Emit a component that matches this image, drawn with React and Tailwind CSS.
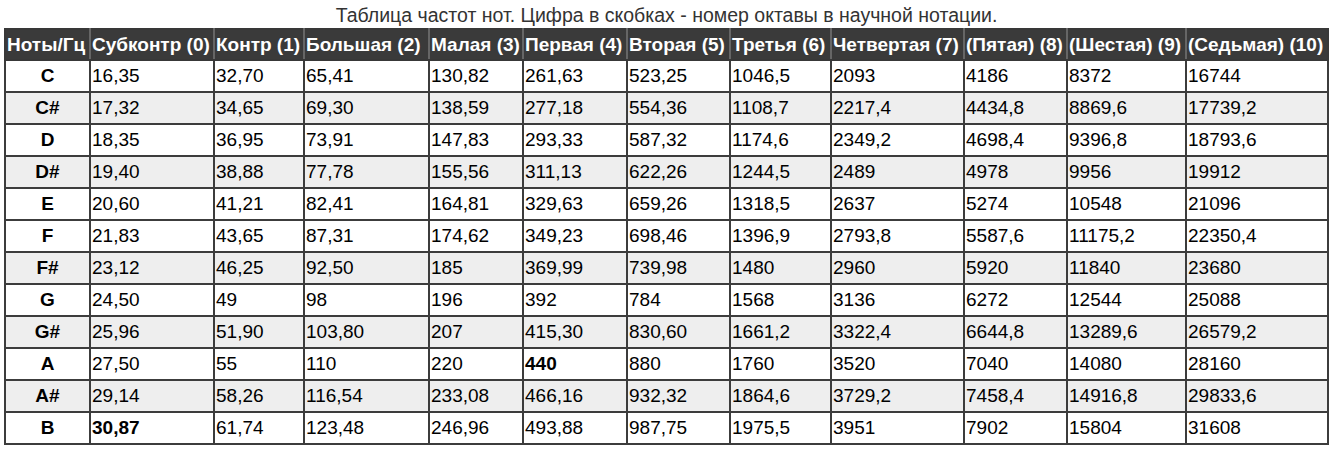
const headers = ["Ноты/Гц","Субконтр (0)","Контр (1)","Большая (2)","Малая (3)","Первая (4)","Вторая (5)","Третья (6)","Четвертая (7)","(Пятая) (8)","(Шестая) (9)","(Седьмая) (10)"];
const widths = ["w-[85px]","w-[124px]","w-[90px]","w-[125px]","w-[94px]","w-[104px]","w-[103px]","w-[101px]","w-[133px]","w-[103px]","w-[119px]","w-[142px]"];
const rows = [
  ["C","16,35","32,70","65,41","130,82","261,63","523,25","1046,5","2093","4186","8372","16744"],
  ["C#","17,32","34,65","69,30","138,59","277,18","554,36","1108,7","2217,4","4434,8","8869,6","17739,2"],
  ["D","18,35","36,95","73,91","147,83","293,33","587,32","1174,6","2349,2","4698,4","9396,8","18793,6"],
  ["D#","19,40","38,88","77,78","155,56","311,13","622,26","1244,5","2489","4978","9956","19912"],
  ["E","20,60","41,21","82,41","164,81","329,63","659,26","1318,5","2637","5274","10548","21096"],
  ["F","21,83","43,65","87,31","174,62","349,23","698,46","1396,9","2793,8","5587,6","11175,2","22350,4"],
  ["F#","23,12","46,25","92,50","185","369,99","739,98","1480","2960","5920","11840","23680"],
  ["G","24,50","49","98","196","392","784","1568","3136","6272","12544","25088"],
  ["G#","25,96","51,90","103,80","207","415,30","830,60","1661,2","3322,4","6644,8","13289,6","26579,2"],
  ["A","27,50","55","110","220","440","880","1760","3520","7040","14080","28160"],
  ["A#","29,14","58,26","116,54","233,08","466,16","932,32","1864,6","3729,2","7458,4","14916,8","29833,6"],
  ["B","30,87","61,74","123,48","246,96","493,88","987,75","1975,5","3951","7902","15804","31608"],
];
const bold = { "9-5": true, "11-1": true };

export default function App() {
  return (
    <div className="w-[1333px] h-[450px] bg-white font-['Liberation_Sans',Arial,sans-serif] text-black">
      <div className="h-[28px] leading-[30px] text-center text-[19.5px] text-[#333]">
        Таблица частот нот. Цифра в скобках - номер октавы в научной нотации.
      </div>
      <div className="pl-[4px]">
        <table className="table-fixed border-collapse w-[1324px] text-[19px]">
          <colgroup>
            {widths.map((w, i) => <col key={i} className={w} />)}
          </colgroup>
          <thead>
            <tr className="h-[31px] bg-[#3a3a3a]">
              {headers.map((h, i) => (
                <th key={i} className="border-2 border-[#383838] border-x-[#666] first:border-l-[#383838] last:border-r-[#383838] px-[1px] text-left font-bold text-white whitespace-nowrap leading-[20px]">
                  {h}
                </th>
              ))}
            </tr>
          </thead>
          <tbody>
            {rows.map((r, ri) => (
              <tr key={ri} className={`h-[32px] ${r[0].includes("#") ? "bg-[#eeeeee]" : "bg-white"}`}>
                {r.map((c, ci) => (
                  <td key={ci} className={`border-2 border-[#3c3c3c] leading-[20px] whitespace-nowrap ${ci === 0 ? "text-center font-bold" : "pl-[1px] text-left"} ${bold[`${ri}-${ci}`] ? "font-bold" : ""}`}>
                    {c}
                  </td>
                ))}
              </tr>
            ))}
          </tbody>
        </table>
      </div>
    </div>
  );
}
